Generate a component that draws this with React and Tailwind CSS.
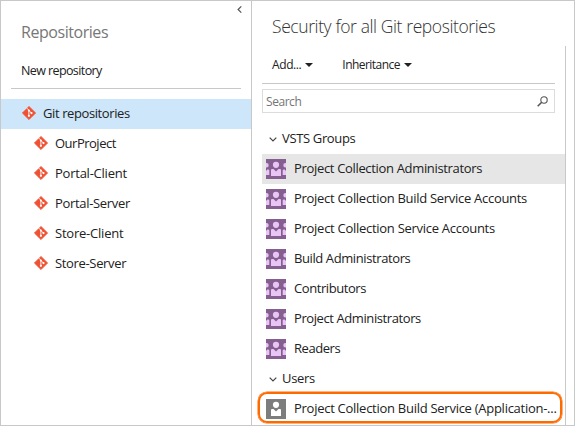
const repositories = [
  { name: "OurProject", tracking: "tracking-[-0.5px]" },
  { name: "Portal-Client", tracking: "tracking-[-0.24px]" },
  { name: "Portal-Server", tracking: "tracking-[-0.32px]" },
  { name: "Store-Client", tracking: "tracking-[-0.22px]" },
  { name: "Store-Server", tracking: "tracking-[-0.34px]" },
];

const groups = [
  { name: "Project Collection Administrators", tracking: "tracking-[-0.33px]", selected: true },
  { name: "Project Collection Build Service Accounts", tracking: "tracking-[-0.29px]" },
  { name: "Project Collection Service Accounts", tracking: "tracking-[-0.28px]" },
  { name: "Build Administrators", tracking: "tracking-[-0.4px]" },
  { name: "Contributors", tracking: "tracking-[-0.43px]" },
  { name: "Project Administrators", tracking: "tracking-[-0.41px]" },
  { name: "Readers", tracking: "tracking-[-0.45px]" },
];

function GitIcon() {
  return (
    <svg className="size-[14px] shrink-0" viewBox="0 0 14 14">
      <path d="M7 .4 13.6 7 7 13.6.4 7Z" fill="#f05133" stroke="#f05133" strokeWidth=".8" strokeLinejoin="round" />
      <path d="M4.9 2.2 6.9 4.2V9.8M7 4.6 9.4 7" fill="none" stroke="#fff" strokeWidth=".9" />
      <circle cx="6.9" cy="4.5" r="1" fill="#fff" />
      <circle cx="6.9" cy="9.8" r="1.1" fill="#fff" />
      <circle cx="9.5" cy="7.1" r="1.1" fill="#fff" />
    </svg>
  );
}

function GroupIcon() {
  return (
    <svg className="size-5 shrink-0" viewBox="0 0 20 20">
      <rect width="20" height="20" fill="#865f91" />
      <g fill="#e9c5f5">
        <circle cx="10" cy="5.8" r="3.1" />
        <path d="M5 10.5 6 10h1.5l2.5 2.6 2.5-2.6H14l1 .5V17H5Z" />
        <path d="M0 4.1h.5a2.2 2.2 0 0 1 0 4.400H0ZM20 4.100h-.5a2.200 2.200 0 0 0 0 4.400h.5Z" />
        <path d="M0 12l1.300-1.500h1.200l.8.700V16H0ZM20 12l-1.300-1.500h-1.200l-.8.700V16H20Z" />
      </g>
    </svg>
  );
}

function UserIcon() {
  return (
    <svg className="size-5 shrink-0" viewBox="0 0 20 20">
      <rect width="20" height="20" fill="#7d7d7d" />
      <circle cx="10" cy="5.8" r="3.1" fill="#fff" />
      <path d="M5 10.5 6 10h1.5l2.5 2.6 2.5-2.6H14l1 .5V17H5Z" fill="#fff" />
    </svg>
  );
}

function ChevronDown() {
  return (
    <svg className="h-[5px] w-2 shrink-0" viewBox="0 0 8 5">
      <path d="M.7.7 4 4 7.3.7" fill="none" stroke="#444" strokeWidth="1.2" />
    </svg>
  );
}

function Caret() {
  return (
    <svg className="h-1 w-2 shrink-0" viewBox="0 0 8 4">
      <path d="M0 0h8L4 4Z" fill="#212121" />
    </svg>
  );
}

function SectionHeader({ children }) {
  return (
    <div className="flex h-[30px] items-center gap-[5px] pl-[7px]">
      <ChevronDown />
      <span className="pb-0.5 tracking-[-0.35px]">{children}</span>
    </div>
  );
}

export default function App() {
  return (
    <div className="flex h-[426px] w-[575px] overflow-hidden whitespace-nowrap border border-[#c8c8c8] bg-white font-['Open_Sans','Noto_Sans',sans-serif] text-[13px] leading-[18px] text-[#212121]">
      <aside className="w-[251px] shrink-0 border-r border-[#c8c8c8]">
        <div className="flex h-4 items-center justify-end pr-[9px]">
          <svg className="h-[7px] w-[5px]" viewBox="0 0 5 7">
            <path d="M4.3.4 1.1 3.5 4.3 6.6" fill="none" stroke="#555" strokeWidth="1.2" />
          </svg>
        </div>
        <h1 className="flex h-[30px] items-center pl-5 text-base tracking-[-0.45px] text-[#777]">Repositories</h1>
        <div className="mx-[10px] flex h-[42px] items-center border-b border-[#c8c8c8] pl-[10px]">
          <span className="pt-1.5 text-[12.5px] tracking-[-0.6px]">New repository</span>
        </div>
        <div className="mt-[10px] flex h-[30px] items-center gap-[7px] bg-[#cde6f9] pb-0.5 pl-[21px]">
          <GitIcon />
          <span className="tracking-[-0.4px]">Git repositories</span>
        </div>
        {repositories.map(({ name, tracking }) => (
          <div key={name} className="flex h-[30px] items-center gap-[7px] pb-0.5 pl-[33px]">
            <GitIcon />
            <span className={tracking}>{name}</span>
          </div>
        ))}
      </aside>

      <main className="flex min-w-0 flex-1 flex-col pl-[10px]">
        <h2 className="flex h-[45px] shrink-0 items-center pl-[10px] pt-1 text-[17.5px] font-light tracking-[-0.4px] text-[#333]">
          Security for all Git repositories
        </h2>
        <div className="mr-2 flex min-h-0 flex-1 flex-col border-r border-[#c8c8c8]">
          <div className="mr-[10px] flex h-[38px] shrink-0 items-center gap-[29px] border-b border-[#c8c8c8] pl-[10px] text-xs">
            <span className="flex items-center gap-1"><span className="tracking-[-0.4px]">Add...</span><Caret /></span>
            <span className="flex items-center gap-1"><span className="tracking-[-0.55px]">Inheritance</span><Caret /></span>
          </div>
          <div className="mr-[10px] mt-[5px] flex h-6 shrink-0 items-center justify-between border border-[#dcdcdc] pl-[3px] pr-[6px] text-xs text-[#757575]">
            <span className="pt-0.5 tracking-[-0.45px]">Search</span>
            <svg className="size-[11px]" viewBox="0 0 11 11" fill="none" stroke="#555">
              <circle cx="7" cy="4" r="3.2" strokeWidth="1.1" />
              <path d="M4.7 6.3.7 10.3" strokeWidth="1.6" />
            </svg>
          </div>
          <div className="mt-[11px]">
            <SectionHeader>VSTS Groups</SectionHeader>
            {groups.map(({ name, tracking, selected }) => (
              <div key={name} className={`flex h-[30px] items-center gap-2 pl-1 ${selected ? "bg-[#e6e6e6]" : ""}`}>
                <GroupIcon />
                <span className={`pb-0.5 ${tracking}`}>{name}</span>
              </div>
            ))}
            <SectionHeader>Users</SectionHeader>
            <div className="relative flex h-[30px] items-center gap-2 pl-1">
              <UserIcon />
              <span className="pb-0.5 tracking-[-0.27px]">Project Collection Build Service (Application-...</span>
              <div className="absolute -left-1 -top-[2px] h-[31px] w-[304px] rounded-[9px] border-2 border-[#ff6a00] ring-[0.5px] ring-[#ff6a00]" />
            </div>
          </div>
        </div>
      </main>
    </div>
  );
}
